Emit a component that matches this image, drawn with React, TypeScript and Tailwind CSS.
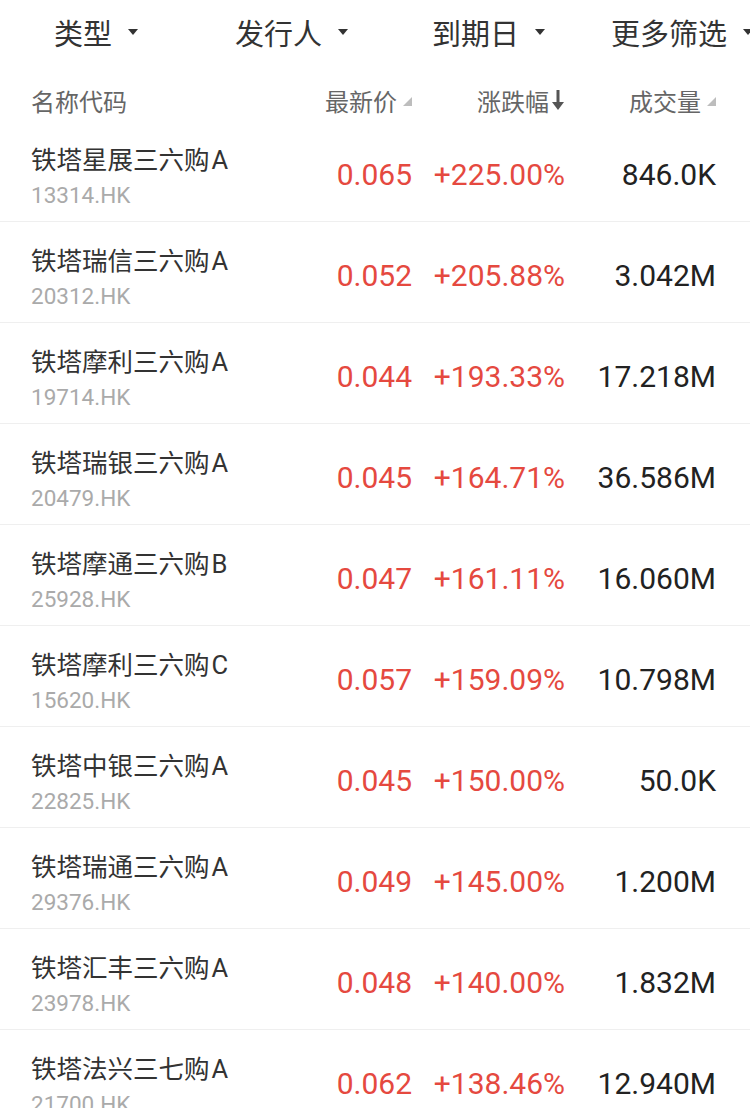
const CJK = "font-['Noto_Sans_CJK_SC',sans-serif]"
const NUM = "font-['Roboto','Noto_Sans_CJK_SC',sans-serif]"

type Row = { name: string; suffix: string; code: string; price: string; pct: string; vol: string }

const ROWS: Row[] = [
  { name: '铁塔星展三六购', suffix: 'A', code: '13314.HK', price: '0.065', pct: '+225.00%', vol: '846.0K' },
  { name: '铁塔瑞信三六购', suffix: 'A', code: '20312.HK', price: '0.052', pct: '+205.88%', vol: '3.042M' },
  { name: '铁塔摩利三六购', suffix: 'A', code: '19714.HK', price: '0.044', pct: '+193.33%', vol: '17.218M' },
  { name: '铁塔瑞银三六购', suffix: 'A', code: '20479.HK', price: '0.045', pct: '+164.71%', vol: '36.586M' },
  { name: '铁塔摩通三六购', suffix: 'B', code: '25928.HK', price: '0.047', pct: '+161.11%', vol: '16.060M' },
  { name: '铁塔摩利三六购', suffix: 'C', code: '15620.HK', price: '0.057', pct: '+159.09%', vol: '10.798M' },
  { name: '铁塔中银三六购', suffix: 'A', code: '22825.HK', price: '0.045', pct: '+150.00%', vol: '50.0K' },
  { name: '铁塔瑞通三六购', suffix: 'A', code: '29376.HK', price: '0.049', pct: '+145.00%', vol: '1.200M' },
  { name: '铁塔汇丰三六购', suffix: 'A', code: '23978.HK', price: '0.048', pct: '+140.00%', vol: '1.832M' },
  { name: '铁塔法兴三七购', suffix: 'A', code: '21700.HK', price: '0.062', pct: '+138.46%', vol: '12.940M' },
]

function Caret() {
  return (
    <svg width="10" height="6" viewBox="0 0 10 6" className="ml-[16px] shrink-0">
      <path d="M0 0h10L5 6z" fill="#333" />
    </svg>
  )
}

function SortCorner() {
  return (
    <svg width="9" height="9" viewBox="0 0 9 9" className="ml-[6px] mt-[8px] shrink-0">
      <path d="M9 0v9H0z" fill="#bdbdbd" />
    </svg>
  )
}

function DownArrow() {
  return (
    <svg width="14" height="22" viewBox="0 0 14 22" className="ml-[2px] shrink-0">
      <path d="M7 1v17" stroke="#555" strokeWidth="3" />
      <path d="M1 13h12L7 21z" fill="#555" />
    </svg>
  )
}

export default function App() {
  return (
    <div className={`w-[750px] h-[1108px] overflow-hidden bg-white ${CJK}`}>
      {/* filter bar */}
      <div className="flex h-[64px] items-center overflow-hidden pl-[54px] text-[29px] leading-none text-[#333] whitespace-nowrap">
        <div className="flex w-[181px] shrink-0 items-center">类型<Caret /></div>
        <div className="flex w-[197px] shrink-0 items-center">发行人<Caret /></div>
        <div className="flex w-[179px] shrink-0 items-center">到期日<Caret /></div>
        <div className="flex shrink-0 items-center">更多筛选<Caret /></div>
      </div>

      {/* column header */}
      <div className="grid h-[57px] grid-cols-[289px_92px_153px_151px] pl-[31px] pr-[34px] pt-[25px] text-[24px] leading-[24px] text-[#666]">
        <div>名称代码</div>
        <div className="flex justify-end">最新价<SortCorner /></div>
        <div className="flex justify-end">涨跌幅<DownArrow /></div>
        <div className="flex justify-end">成交量<SortCorner /></div>
      </div>

      {ROWS.map((r, i) => (
        <div
          key={i}
          className="grid h-[101px] grid-cols-[289px_92px_153px_151px] border-b border-[#efefef] pl-[31px] pr-[34px]"
        >
          <div className="flex flex-col pt-[24px]">
            <div className="text-[25.5px] leading-[26px] text-[#333] whitespace-nowrap">
              {r.name}
              <span className={`${NUM} ml-[2px]`}>{r.suffix}</span>
            </div>
            <div className={`${NUM} mt-[11px] text-[22.5px] leading-[22px] text-[#aaa]`}>{r.code}</div>
          </div>
          <div className={`${NUM} pt-[39px] text-right text-[30px] leading-[30px] text-[#e5493f]`}>{r.price}</div>
          <div className={`${NUM} pt-[39px] text-right text-[30px] leading-[30px] text-[#e5493f]`}>{r.pct}</div>
          <div className={`${NUM} pt-[39px] text-right text-[30px] leading-[30px] text-[#222]`}>{r.vol}</div>
        </div>
      ))}
    </div>
  )
}
